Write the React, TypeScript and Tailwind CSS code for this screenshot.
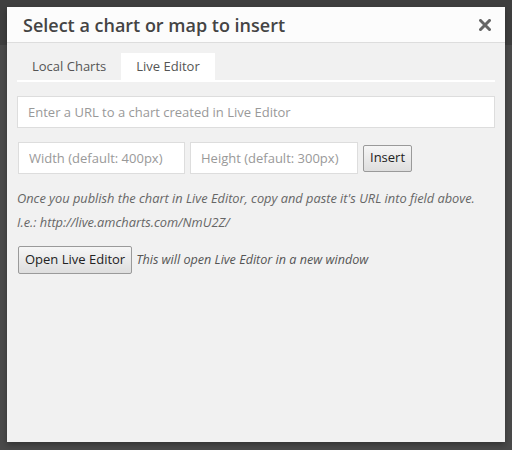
import React from "react";

export default function App() {
    return (
        <div
            className="h-[450px] w-[512px] bg-[linear-gradient(#3f3f3f_0_45px,#4a4a4a_45px)] pt-[7px] pl-[7px]"
            style={{ fontFamily: '"Open Sans", sans-serif' }}
        >
            <div className="flex h-[435px] w-[498px] flex-col bg-[#f1f1f1] shadow-[0_3px_6px_rgba(0,0,0,0.3)]">
                {/* header */}
                <div className="flex h-[36px] items-center justify-between border-b border-[#dddddd] bg-[#fcfcfc] pl-[16px] pr-[14px]">
                    <h1 className="mt-[2px] text-[18px] font-semibold text-[#444444]">Select a chart or map to insert</h1>
                    <svg width="12" height="12" viewBox="0 0 12 12" className="mt-[1px]">
                        <path d="M1.5 1.5 L10.5 10.5 M10.5 1.5 L1.5 10.5" stroke="#666666" strokeWidth="3" strokeLinecap="square" />
                    </svg>
                </div>

                <div className="flex flex-col px-[10px] pt-[10px]">
                    {/* tabs */}
                    <div className="flex h-[29px] border-b-2 border-white">
                        <div className="flex items-center px-[15px] pt-[1px] text-[13px] text-[#555555]">Local Charts</div>
                        <div className="flex items-center bg-white px-[15px] pt-[1px] text-[13px] text-[#555555]">Live Editor</div>
                    </div>

                    <input
                        className="mt-[14px] h-[32px] w-full border border-[#dddddd] bg-white px-[10px] text-[13px] outline-none placeholder:text-[#999999]"
                        placeholder="Enter a URL to a chart created in Live Editor"
                    />

                    <div className="mt-[14px] flex items-center gap-[5px] pl-[1px]">
                        <input
                            className="h-[32px] w-[167px] border border-[#dddddd] bg-white px-[10px] text-[13px] outline-none placeholder:text-[#999999]"
                            placeholder="Width (default: 400px)"
                        />
                        <input
                            className="h-[32px] w-[168px] border border-[#dddddd] bg-white px-[10px] text-[13px] outline-none placeholder:text-[#999999]"
                            placeholder="Height (default: 300px)"
                        />
                        <button className="h-[27px] rounded-[2px] border border-[#9a9a9a] bg-[linear-gradient(#f6f6f6,#dedede)] px-[6px] text-[13px] text-[#222222]">
                            Insert
                        </button>
                    </div>

                    <p className="mt-[12px] text-[12.8px] italic leading-[24px] text-[#666666]">
                        Once you publish the chart in Live Editor, copy and paste it's URL into field above.
                        <br />
                        I.e.: http://live.amcharts.com/NmU2Z/
                    </p>

                    <div className="mt-[12px] flex items-center gap-[4px] pl-[1px]">
                        <button className="h-[28px] rounded-[2px] border border-[#9a9a9a] bg-[linear-gradient(#f6f6f6,#dedede)] px-[6px] text-[13px] text-[#222222]">
                            Open Live Editor
                        </button>
                        <span className="text-[12.6px] italic text-[#555555]">This will open Live Editor in a new window</span>
                    </div>
                </div>
            </div>
        </div>
    );
}
